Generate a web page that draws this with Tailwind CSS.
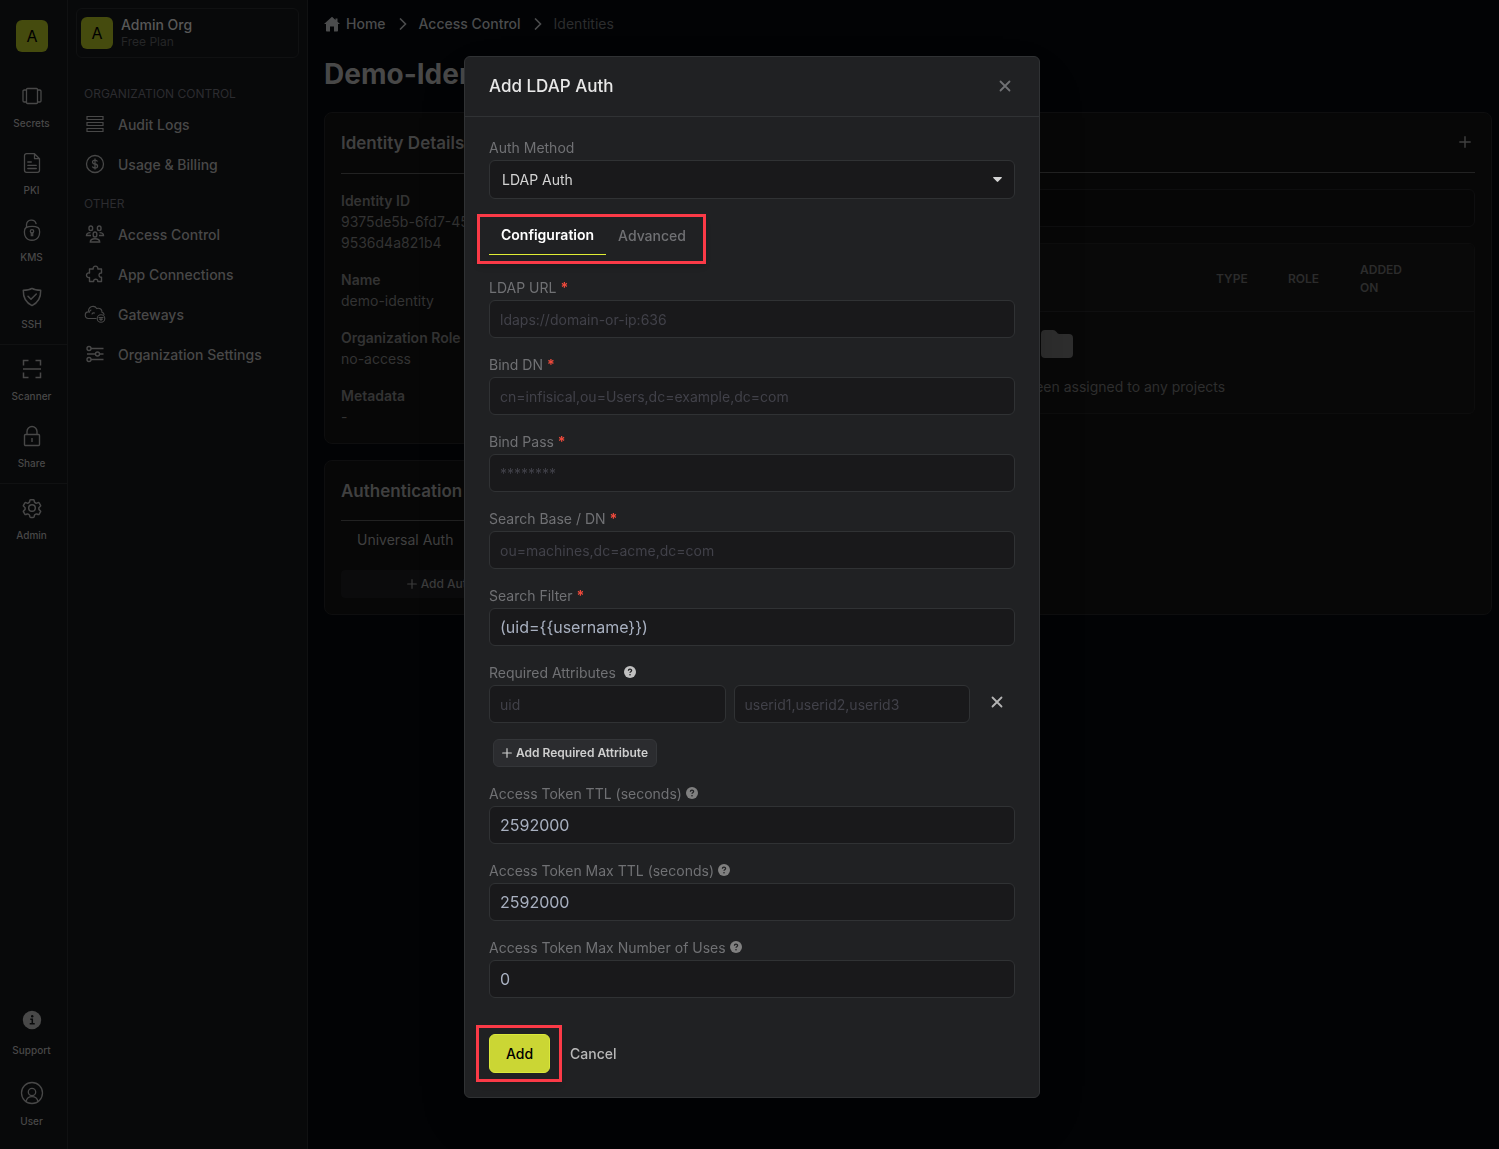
<!DOCTYPE html>
<html lang="en">
<head>
  <meta charset="UTF-8">
  <meta name="viewport" content="width=device-width, initial-scale=1.0">
  <title>Demo-Identity</title>
  <script src="https://cdn.jsdelivr.net/npm/@tailwindcss/browser@4"></script>
</head>
<body class="bg-[#020305] font-['Inter',sans-serif] text-sm leading-[21px] text-[#484848]">

<!-- Shared icon shapes -->
<svg class="hidden">
  <symbol id="question" viewBox="0 0 12 12">
    <circle cx="6" cy="6" r="6" fill="currentColor"/>
    <path d="M4.4 4.7c0-2 3.2-2 3.2-.1 0 1.1-1.6 1.1-1.6 2.2" fill="none" stroke="#202123" stroke-width="1.3"/>
    <circle cx="6" cy="8.7" r=".8" fill="#202123"/>
  </symbol>
  <symbol id="cross" viewBox="0 0 12 12">
    <path d="M1.5 1.5l9 9m0-9l-9 9" fill="none" stroke="currentColor" stroke-width="1.8" stroke-linecap="round"/>
  </symbol>
  <symbol id="plus" viewBox="0 0 12 12">
    <path d="M6 .8v10.4M.8 6h10.4" fill="none" stroke="currentColor" stroke-width="1.4" stroke-linecap="round"/>
  </symbol>
</svg>

<div class="flex min-h-screen">
  <!-- Product bar -->
  <nav class="flex w-[68px] shrink-0 flex-col border-r border-[#101112] bg-[#08090a] pb-[19px] text-[10px] leading-[15px] font-medium">
    <div class="flex h-[76px] justify-center pt-5 pr-[3px]">
      <div class="flex size-8 items-center justify-center rounded-md bg-[#454b0e] text-base font-normal text-black">A</div>
    </div>
    <div class="border-b border-[#101112]">
      <a href="#" class="flex h-[67px] flex-col items-center gap-[9px] pt-[9px] pr-1">
        <svg class="size-[22px]" viewBox="0 0 22 22" fill="none" stroke="currentColor" stroke-width="1.3" stroke-linejoin="round"><rect x="5.5" y="3.5" width="11" height="15" rx="1"/><path d="M5.5 5H3.3C2.5 5 2 5.4 2 6v10c0 .6.5 1 1.3 1h2.2M16.5 5h2.2c.8 0 1.3.4 1.3 1v10c0 .6-.5 1-1.3 1h-2.2"/></svg>
        <span>Secrets</span>
      </a>
      <a href="#" class="flex h-[67px] flex-col items-center gap-[9px] pt-[9px] pr-1">
        <svg class="size-[22px]" viewBox="0 0 22 22" fill="none" stroke="currentColor" stroke-width="1.3" stroke-linejoin="round" stroke-linecap="round"><path d="M13.5 1.7H5.5a2 2 0 0 0-2 2v14.6a2 2 0 0 0 2 2h11a2 2 0 0 0 2-2V6.7zM13.5 1.7v5h5M6.8 10h3.5M6.8 13.3h8.5M6.8 16.5h8.5"/></svg>
        <span>PKI</span>
      </a>
      <a href="#" class="flex h-[67px] flex-col items-center gap-[9px] pt-[9px] pr-1">
        <svg class="size-[22px]" viewBox="0 0 22 22" fill="none" stroke="currentColor" stroke-width="1.3" stroke-linecap="round"><path d="M5.5 8.5V5.600a4.900 4.900 0 0 1 9.600-.9M5 8.600c3.500-1.700 9-1.700 12 0 2.400 1.500 1.900 7 .3 9.500-2.800 4.200-10 4.200-12.600 0-1.600-2.500-2-8 .3-9.500z"/><circle cx="11" cy="12.3" r="1.7"/><path d="M10.3 14v2.5h1.4V14"/></svg>
        <span>KMS</span>
      </a>
      <a href="#" class="flex h-[67px] flex-col items-center gap-[9px] pt-[9px] pr-1">
        <svg class="size-[22px]" viewBox="0 0 22 22" fill="none" stroke="currentColor" stroke-width="1.5" stroke-linejoin="round" stroke-linecap="round"><path d="M11 2.4c2.5 1.6 5.500 1.900 8.700 1.900.2 7-2.100 12.200-8.700 15.300C4.400 16.500 2.100 11.300 2.300 4.300 5.500 4.300 8.500 4 11 2.400z"/><path d="M7 10.300l3 3 5.300-5.300"/></svg>
        <span>SSH</span>
      </a>
    </div>
    <div class="border-b border-[#101112] pt-1">
      <a href="#" class="flex h-[67px] flex-col items-center gap-[9px] pt-[9px] pr-1">
        <svg class="size-[22px]" viewBox="0 0 22 22" fill="none" stroke="currentColor" stroke-width="1.5"><path d="M2.500 7.500v-5h5M14.500 2.500h5v5M19.500 14.500v5h-5M7.500 19.500h-5v-5M2 11h18"/></svg>
        <span>Scanner</span>
      </a>
      <a href="#" class="flex h-[67px] flex-col items-center gap-[9px] pt-[9px] pr-1">
        <svg class="size-[22px]" viewBox="0 0 22 22" fill="none" stroke="currentColor" stroke-width="1.4"><rect x="3.5" y="9.5" width="15" height="11" rx="1"/><path d="M6 9.500V6.500a5 5 0 0 1 10 0v3M11 13v4"/></svg>
        <span>Share</span>
      </a>
    </div>
    <a href="#" class="mt-1 flex h-[67px] flex-col items-center gap-[9px] pt-[9px] pr-1">
      <svg class="size-[22px]" viewBox="0 0 24 24" fill="none" stroke="currentColor" stroke-width="1.6" stroke-linejoin="round"><path d="M9.600 3.900c.1-.6.600-.9 1.100-.9h2.600c.5 0 1 .3 1.100.9l.2 1.300c.1.4.3.700.6.800.400.2.700.400 1 .600.300.2.700.2 1.100.1l1.200-.5c.5-.2 1.100 0 1.400.5l1.300 2.200c.3.500.2 1.100-.3 1.400l-1 .9c-.3.200-.4.600-.4.900v1c0 .4.100.700.400 1l1 .8c.5.4.6 1 .3 1.400l-1.300 2.300c-.3.500-.9.700-1.400.5l-1.200-.5c-.4-.1-.8-.1-1.100.1-.3.200-.6.400-1 .600-.3.200-.5.500-.6.800l-.2 1.300c-.1.500-.6.900-1.100.9h-2.600c-.5 0-1-.4-1.100-.9l-.2-1.300c-.1-.4-.3-.7-.6-.8-.4-.2-.7-.4-1-.6-.3-.2-.7-.2-1.100-.1l-1.200.5c-.5.2-1.100 0-1.400-.5l-1.300-2.300c-.3-.4-.2-1 .3-1.400l1-.8c.3-.3.4-.6.400-1v-1c0-.3-.1-.7-.4-.9l-1-.9c-.5-.3-.6-.9-.3-1.400l1.300-2.200c.3-.5.9-.7 1.400-.5l1.200.5c.4.1.8.1 1.100-.1.3-.2.600-.4 1-.6.300-.1.500-.4.600-.8z"/><circle cx="12" cy="12" r="3.600"/></svg>
      <span>Admin</span>
    </a>
    <a href="#" class="mt-auto flex h-[73px] flex-col items-center gap-3 pt-2 pr-1">
      <svg class="size-[22px]" viewBox="0 0 22 22"><circle cx="11" cy="11" r="9.2" fill="currentColor"/><circle cx="11.2" cy="7.2" r="1.2" fill="#08090a"/><path d="M9.300 10.300h2v4.200M8.700 14.700h5" fill="none" stroke="#08090a" stroke-width="1.5"/></svg>
      <span>Support</span>
    </a>
    <a href="#" class="flex h-[56px] flex-col items-center gap-[9px] pt-[7px] pr-1">
      <svg class="size-6" viewBox="0 0 24 24" fill="none" stroke="currentColor" stroke-width="1.3"><circle cx="12" cy="12" r="10.5"/><circle cx="12" cy="11" r="3.7"/><path d="M6 20.500c1.500-6.500 10.500-6.500 12 0"/></svg>
      <span>User</span>
    </a>
  </nav>

  <!-- Organization menu -->
  <aside class="w-60 shrink-0 border-r border-[#101112] bg-[#08090a] px-2 pt-2 leading-5 font-medium">
    <button class="flex h-[50px] w-[223px] items-center gap-2 rounded-md border border-[#101112] pl-1 text-left">
      <span class="flex size-8 items-center justify-center rounded-md bg-[#454b0e] text-base font-normal text-black">A</span>
      <span class="flex flex-col">
        <span class="leading-[17px] text-[#585858]">Admin Org</span>
        <span class="text-xs leading-[17px] font-normal text-[#252627]">Free Plan</span>
      </span>
    </button>
    <h2 class="mt-[27px] mb-0.5 px-2 text-xs leading-[18px] font-normal text-[#2c2c30]">ORGANIZATION CONTROL</h2>
    <a href="#" class="flex h-10 items-center gap-3 px-2">
      <svg class="size-[22px]" viewBox="0 0 22 22" fill="none" stroke="currentColor" stroke-width="1.2"><path d="M3 2.500h16v3H3zM3 8.500h16v3H3zM3 14.500h16v3H3z"/></svg>
      Audit Logs
    </a>
    <a href="#" class="flex h-10 items-center gap-3 px-2">
      <svg class="size-[22px]" viewBox="0 0 22 22" fill="none" stroke="currentColor" stroke-width="1.3"><circle cx="11" cy="10" r="8.5"/><path d="M13.500 7.500c-.5-1-1.400-1.400-2.500-1.400-3.300 0-3.300 3.500 0 3.900 3.500.4 3.300 4 0 4-1.300 0-2.200-.5-2.700-1.500M11 4.500v11"/></svg>
      Usage &amp; Billing
    </a>
    <h2 class="mt-2.5 mb-0.5 px-2 text-xs leading-[18px] font-normal text-[#2c2c30]">OTHER</h2>
    <a href="#" class="flex h-10 items-center gap-3 px-2">
      <svg class="size-[22px]" viewBox="0 0 22 22" fill="none" stroke="currentColor" stroke-width="1.4"><rect x="5" y="2" width="3.6" height="4.6" rx="1.8"/><rect x="13.4" y="2" width="3.6" height="4.6" rx="1.8"/><rect x="9.2" y="8" width="3.6" height="5" rx="1.8"/><path d="M7 11.500H2.500c0-2 1.500-2.900 4-2.900M15 11.500h4.500c0-2-1.500-2.900-4-2.900M6.300 18c0-2.400 1.500-3.200 4.700-3.200s4.700.8 4.700 3.200z"/></svg>
      Access Control
    </a>
    <a href="#" class="flex h-10 items-center gap-3 px-2">
      <svg class="size-[22px]" viewBox="0 0 22 22" fill="none" stroke="currentColor" stroke-width="1.4" stroke-linejoin="round"><path d="M5.500 5h3.700c-.8-3.800 5.400-3.800 4.600 0h3.700v4c-3.300-.6-3.300 4.800 0 4.200v4.300h-3.800c.6-3-4.600-3-4 0H5.500v-4c-4 .9-4-5.400 0-4.500z"/></svg>
      App Connections
    </a>
    <a href="#" class="flex h-10 items-center gap-3 px-2">
      <svg class="size-[22px]" viewBox="0 0 22 22" fill="none" stroke="currentColor" stroke-width="1.1" stroke-linecap="round"><path d="M12 14.500H4.500c-4.200-.2-4.400-6.300-.2-6.600C4.500 2 10.500.8 12.700 4.500c3.300-1 5.500 1.200 5.300 3.800 1.500.4 2 1.400 2 2.300M8 10c.5-1 1.500-1.300 2.500-1M7 6c-1 .5-1.500 1.300-1.600 2.300"/><circle cx="17" cy="14.5" r="3.8"/><path d="M15 13.500h4M17 13.500v2.500M15.500 15l1.500 1.200 1.500-1.200"/></svg>
      Gateways
    </a>
    <a href="#" class="flex h-10 items-center gap-3 px-2">
      <svg class="size-[22px]" viewBox="0 0 22 22" fill="none" stroke="currentColor" stroke-width="1.4"><circle cx="5" cy="4.5" r="2"/><circle cx="13.5" cy="10" r="2"/><circle cx="5" cy="15.5" r="2"/><path d="M7 4.500h12.500M3 10h8.500M15.500 10h4M7 15.500h12.500"/></svg>
      Organization Settings
    </a>
  </aside>

  <!-- Identity page -->
  <main class="flex min-w-0 flex-1 flex-col pt-[13px] pr-[7px] pl-4">
    <nav class="flex h-[21px] items-center gap-[11px] font-medium text-[#4b4c4d]">
      <a href="#" class="flex items-center gap-1.5">
        <svg class="size-4" viewBox="0 0 16 16" fill="currentColor"><path d="M8 .8L0 8h2v6.500c0 .6.4 1 1 1h3v-5h4v5h3c.6 0 1-.4 1-1V8h2l-2.500-2.300V2.500h-2v1.400z"/></svg>
        Home
      </a>
      <svg class="h-3 w-[11px]" viewBox="0 0 11 12" fill="none" stroke="currentColor" stroke-width="1.6"><path d="M3 .5L8.500 6 3 11.500"/></svg>
      <a href="#">Access Control</a>
      <svg class="h-3 w-[11px]" viewBox="0 0 11 12" fill="none" stroke="currentColor" stroke-width="1.6"><path d="M3 .5L8.500 6 3 11.500"/></svg>
      <span class="font-normal text-[#2c2d2e]">Identities</span>
    </nav>
    <h1 class="mt-[22px] text-[28px] leading-9 font-bold">Demo-Identity</h1>

    <div class="mt-5 flex gap-4">
      <div class="flex w-[280px] shrink-0 flex-col gap-4">
        <section class="rounded-lg border border-[#0e0e0f] bg-[#070707] p-4 text-[#333]">
          <h2 class="h-[45px] border-b border-[#222] pt-[3px] text-[17px] leading-[22px] font-semibold text-[#404040]">Identity Details</h2>
          <dl class="pt-4 [&>dd]:mb-4 [&>dt]:font-semibold [&>dd:last-child]:mb-0">
            <dt>Identity ID</dt>
            <dd>9375de5b-6fd7-4521-b3a2-9536d4a821b4</dd>
            <dt>Name</dt>
            <dd>demo-identity</dd>
            <dt>Organization Role</dt>
            <dd>no-access</dd>
            <dt>Metadata</dt>
            <dd>-</dd>
          </dl>
        </section>
        <section class="rounded-lg border border-[#0e0e0f] bg-[#070707] p-4">
          <h2 class="h-11 border-b border-[#222] pt-[3px] text-[17px] leading-[22px] font-semibold text-[#404040]">Authentication</h2>
          <p class="px-4 pt-2 pb-5 text-[#404040]">Universal Auth</p>
          <button class="flex h-7 w-full items-center justify-center gap-1 rounded bg-[#0b0b0c] text-xs font-medium text-[#3c3c3c]">
            <svg class="size-[10px]"><use href="#plus"/></svg>
            Add Auth Method
          </button>
        </section>
      </div>

      <section class="min-w-0 flex-1 rounded-lg border border-[#0e0e0f] bg-[#070707] p-4">
        <div class="flex h-11 justify-between border-b border-[#222] pt-[3px] text-[#404040]">
          <h2 class="text-[17px] leading-[22px] font-semibold">Projects</h2>
          <button class="mt-1 mr-1 size-3" aria-label="Add project"><svg class="size-3"><use href="#plus"/></svg></button>
        </div>
        <input type="text" aria-label="Search projects" class="mt-4 block h-[38px] w-full rounded-md border border-[#0e0e0f] bg-[#060606] px-3">
        <div class="mt-4 overflow-hidden rounded-md border border-[#0d0d0d] bg-[#080808]">
          <table class="w-full table-fixed text-left">
            <thead class="border-b border-[#0f0f10] bg-[#090909] text-xs leading-[18px] text-[#2c2c2c]">
              <tr class="h-[67px]">
                <th class="px-5 pt-1 font-semibold">NAME</th>
                <th class="w-[72px] pt-1 pl-5 font-semibold">TYPE</th>
                <th class="w-[72px] pt-1 pl-5 font-semibold">ROLE</th>
                <th class="w-[90px] px-5 pt-1 font-semibold">ADDED ON</th>
                <th class="w-11"></th>
              </tr>
            </thead>
            <tbody>
              <tr>
                <td colspan="5" class="pt-[18px] pb-4 pl-0.5 text-center text-[#2e2e2e]">
                  <svg class="mx-auto mb-[18px] h-7 w-8" viewBox="0 0 32 28" fill="currentColor"><path d="M4 0h8c1.500 0 2.500.7 3.500 2s1.500 2 3 2H28a4 4 0 0 1 4 4v16a4 4 0 0 1-4 4H4a4 4 0 0 1-4-4V4a4 4 0 0 1 4-4z"/></svg>
                  This identity has not been assigned to any projects
                </td>
              </tr>
            </tbody>
          </table>
        </div>
      </section>
    </div>
  </main>
</div>

<!-- Add LDAP Auth dialog -->
<div class="fixed inset-0 flex items-start justify-center overflow-hidden pt-14 pl-[5px]">
  <div role="dialog" aria-labelledby="dialog-title" class="w-full max-w-xl rounded-md border border-[#303234] bg-[#202123] text-[#707174] shadow-2xl">
    <div class="flex h-[60px] items-center justify-between border-b border-[#303234] px-6">
      <h2 id="dialog-title" class="text-[17px] font-medium text-[#e8e8e8]">Add LDAP Auth</h2>
      <button class="mr-1 mb-0.5 size-3" aria-label="Close"><svg class="size-3"><use href="#cross"/></svg></button>
    </div>

    <form class="px-6 pt-5 pb-6">
      <label for="method" class="mb-0.5 block">Auth Method</label>
      <div class="relative">
        <select id="method" class="block h-[39px] w-full appearance-none rounded-md border border-[#303234] bg-[#19191b] px-3 text-[#d4d4d4]">
          <option>LDAP Auth</option>
        </select>
        <svg class="pointer-events-none absolute top-[17px] right-[13px] h-[5px] w-[9px] text-[#d4d4d4]" viewBox="0 0 9 5"><path d="M.8 0h7.400c.7 0 1 .6.500 1.100L5.200 4.600c-.4.4-1 .4-1.400 0L.3 1.100C-.2.6.1 0 .8 0z" fill="currentColor"/></svg>
      </div>

      <div class="relative mt-4 mb-[22px] flex h-10 w-max font-medium" role="tablist">
        <button type="button" role="tab" aria-selected="true" class="border-b border-[#e0ed34] px-3 font-semibold text-white">Configuration</button>
        <button type="button" role="tab" aria-selected="false" class="px-3">Advanced</button>
        <div class="pointer-events-none absolute -top-px -right-2 -bottom-[9px] -left-3 border-[3px] border-[#fb3a47] shadow-md"></div>
      </div>

      <label for="url" class="mb-0.5 block">LDAP URL <span class="font-bold text-[#ef4a3c]">*</span></label>
      <input id="url" type="text" placeholder="ldaps://domain-or-ip:636" class="mb-4 block h-[38px] w-full rounded-md border border-[#303234] bg-[#19191b] px-2.5 placeholder:text-[#414149]">

      <label for="bind-dn" class="mb-0.5 block">Bind DN <span class="font-bold text-[#ef4a3c]">*</span></label>
      <input id="bind-dn" type="text" placeholder="cn=infisical,ou=Users,dc=example,dc=com" class="mb-4 block h-[38px] w-full rounded-md border border-[#303234] bg-[#19191b] px-2.5 placeholder:text-[#414149]">

      <label for="bind-pass" class="mb-0.5 block">Bind Pass <span class="font-bold text-[#ef4a3c]">*</span></label>
      <input id="bind-pass" type="password" placeholder="********" class="mb-4 block h-[38px] w-full rounded-md border border-[#303234] bg-[#19191b] px-2.5 placeholder:text-[#414149]">

      <label for="base" class="mb-0.5 block">Search Base / DN <span class="font-bold text-[#ef4a3c]">*</span></label>
      <input id="base" type="text" placeholder="ou=machines,dc=acme,dc=com" class="mb-4 block h-[38px] w-full rounded-md border border-[#303234] bg-[#19191b] px-2.5 placeholder:text-[#414149]">

      <label for="filter" class="mb-0.5 block">Search Filter <span class="font-bold text-[#ef4a3c]">*</span></label>
      <input id="filter" type="text" value="(uid={{username}})" class="mb-4 block h-[38px] w-full rounded-md border border-[#303234] bg-[#19191b] px-2.5 text-base text-[#a8b0c0]">

      <label for="attribute" class="mb-0.5 flex items-center gap-2">Required Attributes <svg class="mb-0.5 size-3 text-[#c0c0c0]"><use href="#question"/></svg></label>
      <div class="mb-4 flex gap-2">
        <input id="attribute" type="text" placeholder="uid" class="h-[38px] min-w-0 flex-1 rounded-md border border-[#303234] bg-[#19191b] px-2.5 placeholder:text-[#414149]">
        <input type="text" aria-label="Attribute values" placeholder="userid1,userid2,userid3" class="h-[38px] min-w-0 flex-1 rounded-md border border-[#303234] bg-[#19191b] px-2.5 placeholder:text-[#414149]">
        <button type="button" aria-label="Remove attribute" class="flex w-[37px] items-center justify-center pb-1 text-[#b4b4b4]"><svg class="size-3"><use href="#cross"/></svg></button>
      </div>
      <button type="button" class="mb-4 ml-1 flex h-7 items-center gap-1 rounded-md border border-[#343639] bg-[#2b2c2f] px-2 text-xs font-semibold text-[#cfcfcf]">
        <svg class="size-[10px]"><use href="#plus"/></svg>
        Add Required Attribute
      </button>

      <label for="ttl" class="mb-0.5 flex items-center gap-1">Access Token TTL (seconds) <svg class="mb-0.5 size-3 text-[#808080]"><use href="#question"/></svg></label>
      <input id="ttl" type="text" value="2592000" class="mb-4 block h-[38px] w-full rounded-md border border-[#303234] bg-[#19191b] px-2.5 text-base text-[#a8b0c0]">

      <label for="max-ttl" class="mb-0.5 flex items-center gap-1">Access Token Max TTL (seconds) <svg class="mb-0.5 size-3 text-[#808080]"><use href="#question"/></svg></label>
      <input id="max-ttl" type="text" value="2592000" class="mb-4 block h-[38px] w-full rounded-md border border-[#303234] bg-[#19191b] px-2.5 text-base text-[#a8b0c0]">

      <label for="uses" class="mb-0.5 flex items-center gap-1">Access Token Max Number of Uses <svg class="mb-0.5 size-3 text-[#808080]"><use href="#question"/></svg></label>
      <input id="uses" type="text" value="0" class="block h-[38px] w-full rounded-md border border-[#303234] bg-[#19191b] px-2.5 text-base text-[#a8b0c0]">

      <div class="mt-9 flex items-center gap-5 font-medium">
        <div class="relative">
          <button type="submit" class="block h-[39px] w-[61px] rounded-md border border-[#dbe83a] bg-[#cbd634] text-black">Add</button>
          <div class="pointer-events-none absolute -top-[9px] -right-3 -bottom-[9px] -left-[13px] border-[3px] border-[#fb3a47] shadow-md"></div>
        </div>
        <button type="button" class="text-[#b8b8b8]">Cancel</button>
      </div>
    </form>
  </div>
</div>
</body>
</html>
